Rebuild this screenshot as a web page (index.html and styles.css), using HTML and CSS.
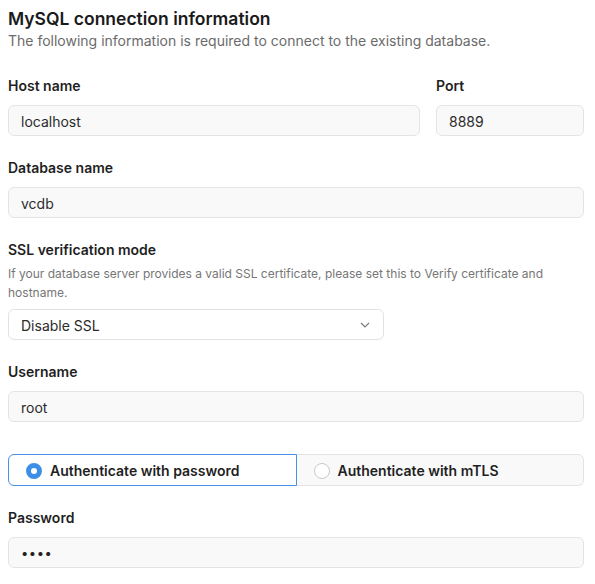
FILE: index.html
```html
<!DOCTYPE html>
<html>
<head>
<meta charset="utf-8">
<link rel="stylesheet" href="styles.css">
</head>
<body>
<div class="form">
  <div class="header">
    <h2 class="title">MySQL connection information</h2>
    <p class="subtitle">The following information is required to connect to the existing database.</p>
  </div>

  <div class="row">
    <div class="field grow">
      <label class="label">Host name</label>
      <div class="input">localhost</div>
    </div>
    <div class="field port">
      <label class="label">Port</label>
      <div class="input">8889</div>
    </div>
  </div>

  <div class="field">
    <label class="label">Database name</label>
    <div class="input">vcdb</div>
  </div>

  <div class="field">
    <label class="label">SSL verification mode</label>
    <p class="help">If your database server provides a valid SSL certificate, please set this to Verify certificate and hostname.</p>
    <div class="select">
      <span>Disable SSL</span>
      <svg class="chevron" width="10" height="6" viewBox="0 0 10 6"><path d="M1 1 L5 5 L9 1" fill="none" stroke="#7a7a7a" stroke-width="1.1"/></svg>
    </div>
  </div>

  <div class="field">
    <label class="label">Username</label>
    <div class="input">root</div>
  </div>

  <div class="segmented">
    <div class="seg active">
      <span class="radio on"></span>
      <span class="seg-text">Authenticate with password</span>
    </div>
    <div class="seg">
      <span class="radio"></span>
      <span class="seg-text">Authenticate with mTLS</span>
    </div>
  </div>

  <div class="field">
    <label class="label">Password</label>
    <div class="input dots">••••</div>
  </div>
</div>
</body>
</html>
```

FILE: styles.css
```css
* { box-sizing: border-box; }
body {
  margin: 8px;
  font-family: Inter, "Noto Sans", sans-serif;
  color: #1f1f1f;
  background: #fff;
}
.form {
  width: 576px;
  display: flex;
  flex-direction: column;
  gap: 22px;
}
.header { margin-bottom: 3px; }
.title {
  margin: 0;
  font-size: 17.5px;
  font-weight: 600;
  line-height: 22px;
  color: #1a1a1a;
}
.subtitle {
  margin: 1px 0 0;
  font-size: 14px;
  line-height: 20px;
  color: #6b6b6b;
}
.row {
  display: flex;
  gap: 16px;
}
.grow { flex: 1; }
.port { width: 148px; }
.field {
  display: flex;
  flex-direction: column;
}
.label {
  font-size: 14px;
  font-weight: 600;
  line-height: 20px;
  color: #1f1f1f;
  margin-bottom: 9px;
}
.input {
  height: 31px;
  border: 1px solid #e4e4e4;
  border-radius: 6px;
  background: #f9f9f9;
  padding: 1px 12px 0;
  font-size: 14px;
  line-height: 29px;
  color: #2b2b2b;
}
.dots {
  font-size: 13px;
  letter-spacing: 0.5px;
  color: #222;
}
.help {
  margin: -5px 0 7px;
  font-size: 12px;
  line-height: 19px;
  color: #767676;
}
.select {
  width: 376px;
  height: 31px;
  border: 1px solid #e2e2e2;
  border-radius: 6px;
  background: #fff;
  padding: 1px 13px 0 12px;
  font-size: 14px;
  color: #2b2b2b;
  display: flex;
  align-items: center;
  justify-content: space-between;
}
.chevron { margin-top: 0; }
.segmented {
  display: flex;
  margin-top: 10px;
  height: 32px;
}
.seg {
  flex: 1;
  display: flex;
  align-items: center;
  gap: 8px;
  padding-left: 17px;
  padding-top: 1px;
  border: 1px solid #e4e4e4;
  border-left: none;
  background: #f9f9f9;
  border-radius: 0 6px 6px 0;
}
.seg.active {
  background: #fff;
  border: 1px solid #4a90e2;
  border-radius: 6px 0 0 6px;
}
.radio {
  width: 16px;
  height: 16px;
  border-radius: 50%;
  border: 1px solid #c8c8c8;
  background: #fff;
  flex: none;
}
.radio.on {
  border: 5px solid #3d8fe6;
  background: #fff;
}
.seg-text {
  font-size: 14px;
  font-weight: 600;
  color: #1f1f1f;
}
```
